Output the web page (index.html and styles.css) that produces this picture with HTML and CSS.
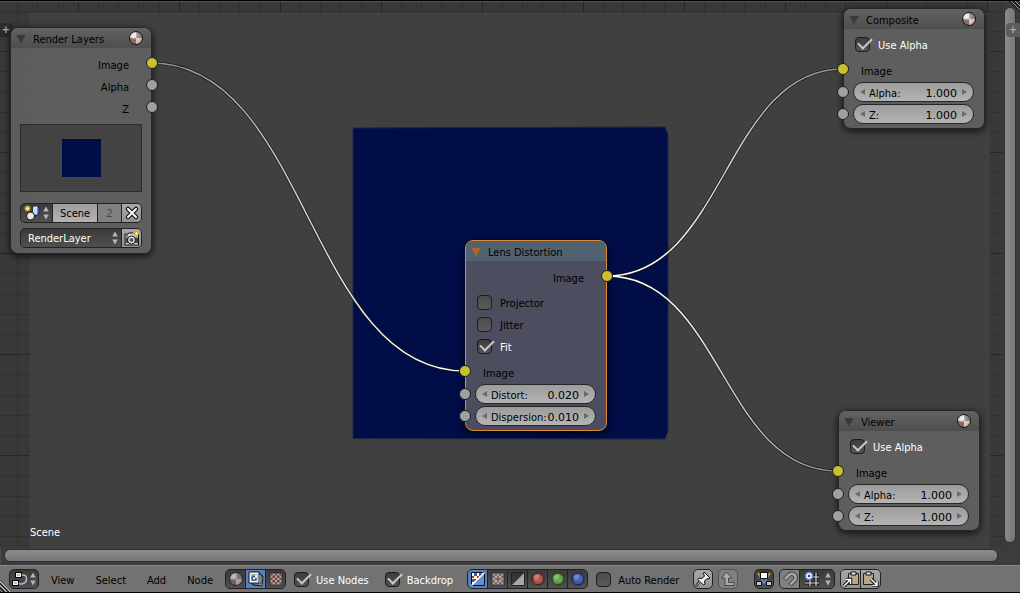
FILE: index.html
```html
<!DOCTYPE html>
<html lang="en">
<head>
<meta charset="UTF-8">
<meta name="viewport" content="width=device-width, initial-scale=1.0">
<title>Node Editor</title>
<link rel="stylesheet" href="styles.css">
</head>
<body>

<!-- shared icons -->
<svg class="defs" aria-hidden="true">
  <defs>
    <radialGradient id="shade" cx="0.35" cy="0.3" r="0.8">
      <stop offset="0" stop-color="#fff" stop-opacity="0.8"/>
      <stop offset="0.5" stop-color="#fff" stop-opacity="0"/>
      <stop offset="1" stop-color="#000" stop-opacity="0.4"/>
    </radialGradient>
    <radialGradient id="shade-soft" cx="0.35" cy="0.3" r="0.8">
      <stop offset="0" stop-color="#fff" stop-opacity="0.35"/>
      <stop offset="0.5" stop-color="#fff" stop-opacity="0"/>
      <stop offset="1" stop-color="#000" stop-opacity="0.4"/>
    </radialGradient>
  </defs>
  <symbol id="i-sphere" viewBox="0 0 16 16">
    <path d="M8 8V1.500A6.500 6.500 0 0 0 1.500 8z" fill="#d0d0d0"/>
    <path d="M8 8V1.500A6.500 6.500 0 0 1 14.500 8z" fill="#86807e"/>
    <path d="M8 8H1.500A6.500 6.500 0 0 0 8 14.500z" fill="#7e6660"/>
    <path d="M8 8v6.500A6.500 6.500 0 0 0 14.500 8z" fill="#ecc4b8"/>
    <circle cx="8" cy="8" r="6.500" fill="url(#shade)" stroke="#151515"/>
  </symbol>
  <symbol id="i-updown" viewBox="0 0 6 14">
    <path d="M3 0.500L5.800 5.500H0.200zM3 13.500L0.200 8.500H5.800z" fill="#b4b4b4"/>
  </symbol>
  <symbol id="i-checker" viewBox="0 0 16 16">
    <rect x="2" y="2" width="12" height="12" fill="#d8d0c8" stroke="#222"/>
    <path d="M2.500 2.500h2v2h-2zM7 2.500h2v2H7zM11.500 2.500h2v2h-2zM4.500 4.500H7V7H4.500zM9 4.500h2.500V7H9zM2.500 7h2v2h-2zM7 7h2v2H7zM11.500 7h2v2h-2zM4.500 9H7v2.500H4.500zM9 9h2.500v2.500H9zM2.500 11.500h2v2h-2zM7 11.500h2v2H7zM11.500 11.500h2v2h-2z" fill="#8c3e38"/>
  </symbol>
</svg>

<main class="editor">
  <section class="canvas">
    <div class="backdrop"></div>
    <svg class="wires" width="1003" height="548" viewBox="0 2 1003 548" aria-hidden="true">
      <defs>
        <linearGradient id="wireIn"><stop offset="0" stop-color="#888"/><stop offset="0.8" stop-color="#fff"/></linearGradient>
        <linearGradient id="wireOut"><stop offset="0.2" stop-color="#fff"/><stop offset="1" stop-color="#888"/></linearGradient>
      </defs>
      <path class="render" d="M353 128L665 127L668 135V431L665 439L353 438.500z"/>
      <path class="wire-edge" d="M151 63C308 63 308 371 465 371M607 276C725 276 725 69 843 69M607 276C722 276 722 471 838 471"/>
      <path class="wire" stroke="url(#wireIn)" d="M151 63C308 63 308 371 465 371"/>
      <path class="wire" stroke="url(#wireOut)" d="M607 276C725 276 725 69 843 69"/>
      <path class="wire" stroke="url(#wireOut)" d="M607 276C722 276 722 471 838 471"/>
    </svg>

    <button class="expand expand-left" aria-label="Show tools">+</button>

    <article class="node node-layers">
      <header class="node-head">
        <i class="fold"></i><h2>Render Layers</h2>
        <svg class="icon"><use href="#i-sphere"/></svg>
      </header>
      <div class="node-body">
        <div class="row out">Image<i class="socket color"></i></div>
        <div class="row out">Alpha<i class="socket"></i></div>
        <div class="row out">Z<i class="socket"></i></div>
        <div class="preview"><div class="preview-img"></div></div>
        <div class="group scene-row">
          <button class="dark browse" aria-label="Browse scene">
            <svg class="icon" viewBox="0 0 16 16">
              <path d="M9 2l4-1 2 1v7l-3 2-3-2z" fill="#5c8ed8" stroke="#16264a"/>
              <path d="M9 2l4-1v8l-4 1z" fill="#c4dcfa"/>
              <circle cx="6.500" cy="11" r="4" fill="#e8e8e8" stroke="#111"/>
              <circle cx="3.500" cy="3.500" r="3" fill="#b89a30"/><circle cx="3.500" cy="3.500" r="1.500" fill="#fff8a8"/>
            </svg>
            <svg class="updown"><use href="#i-updown"/></svg>
          </button>
          <input class="name" type="text" value="Scene" aria-label="Scene name">
          <button class="users">2</button>
          <button class="light" aria-label="Unlink scene">
            <svg class="icon" viewBox="0 0 16 16">
              <path d="M4 4l8 8M12 4l-8 8" stroke="#111" stroke-width="4.500" stroke-linecap="round"/>
              <path d="M4 4l8 8M12 4l-8 8" stroke="#f4f4f4" stroke-width="2.200" stroke-linecap="round"/>
            </svg>
          </button>
        </div>
        <div class="group layer-row">
          <div class="pick">
            <select aria-label="Render layer"><option>RenderLayer</option></select>
            <svg class="updown"><use href="#i-updown"/></svg>
          </div>
          <button class="light" aria-label="Render">
            <svg class="icon" viewBox="0 0 16 16">
              <path d="M1 4h3l1-1h4l1 1h4.500v11H1z" fill="#d8d8d8" stroke="#111"/>
              <path d="M1.500 7.500H14V13H1.500z" fill="#444"/>
              <circle cx="7.500" cy="10" r="4" fill="#e4e4e4" stroke="#111"/>
              <circle cx="7.500" cy="10" r="2" fill="#456"/>
              <path d="M2 5.700h2" stroke="#d22" stroke-width="1.500"/>
              <path d="M12.500 0l1 2.500 2.500 1-2.500 1-1 2.500-1-2.500-2.500-1 2.500-1z" fill="#fff2a0" stroke="#c89020" stroke-width="0.800"/>
            </svg>
          </button>
        </div>
      </div>
    </article>

    <article class="node node-lens selected">
      <header class="node-head">
        <i class="fold"></i><h2>Lens Distortion</h2>
      </header>
      <div class="node-body">
        <div class="row out">Image<i class="socket color"></i></div>
        <div class="checks">
          <label class="row check"><input type="checkbox">Projector</label>
          <label class="row check"><input type="checkbox">Jitter</label>
          <label class="row check"><input type="checkbox" checked>Fit</label>
        </div>
        <div class="row">Image<i class="socket color"></i></div>
        <div class="row num-row"><i class="socket"></i>
          <div class="num"><button class="dec" aria-label="Decrease"></button><label for="distort">Distort:</label><input id="distort" type="text" value="0.020"><button class="inc" aria-label="Increase"></button></div>
        </div>
        <div class="row num-row"><i class="socket"></i>
          <div class="num"><button class="dec" aria-label="Decrease"></button><label for="dispersion">Dispersion:</label><input id="dispersion" type="text" value="0.010"><button class="inc" aria-label="Increase"></button></div>
        </div>
      </div>
    </article>

    <article class="node node-composite">
      <header class="node-head">
        <i class="fold"></i><h2>Composite</h2>
        <svg class="icon"><use href="#i-sphere"/></svg>
      </header>
      <div class="node-body">
        <div class="checks first">
          <label class="row check"><input type="checkbox" checked>Use Alpha</label>
        </div>
        <div class="row">Image<i class="socket color"></i></div>
        <div class="row num-row"><i class="socket"></i>
          <div class="num"><button class="dec" aria-label="Decrease"></button><label for="c-alpha">Alpha:</label><input id="c-alpha" type="text" value="1.000"><button class="inc" aria-label="Increase"></button></div>
        </div>
        <div class="row num-row"><i class="socket"></i>
          <div class="num"><button class="dec" aria-label="Decrease"></button><label for="c-z">Z:</label><input id="c-z" type="text" value="1.000"><button class="inc" aria-label="Increase"></button></div>
        </div>
      </div>
    </article>

    <article class="node node-viewer">
      <header class="node-head">
        <i class="fold"></i><h2>Viewer</h2>
        <svg class="icon"><use href="#i-sphere"/></svg>
      </header>
      <div class="node-body">
        <div class="checks first">
          <label class="row check"><input type="checkbox" checked>Use Alpha</label>
        </div>
        <div class="row">Image<i class="socket color"></i></div>
        <div class="row num-row"><i class="socket"></i>
          <div class="num"><button class="dec" aria-label="Decrease"></button><label for="v-alpha">Alpha:</label><input id="v-alpha" type="text" value="1.000"><button class="inc" aria-label="Increase"></button></div>
        </div>
        <div class="row num-row"><i class="socket"></i>
          <div class="num"><button class="dec" aria-label="Decrease"></button><label for="v-z">Z:</label><input id="v-z" type="text" value="1.000"><button class="inc" aria-label="Increase"></button></div>
        </div>
      </div>
    </article>

    <p class="scene-label">Scene</p>
  </section>

  <div class="gutter-v"><div class="bar-v"></div></div>
  <div class="gutter-h"><div class="bar-h"></div></div>
  <button class="expand expand-right" aria-label="Show properties">+</button>
  <i class="grip grip-top"></i>
</main>

<footer class="toolbar">
  <i class="grip grip-bottom"></i>
  <button class="tool dark editor-type" aria-label="Editor type">
    <svg class="icon" viewBox="0 0 16 16">
      <path d="M8 4h3q3.500 0 3.500 4t-5 5H8" fill="none" stroke="#a8bce8" stroke-width="1.500"/>
      <rect x="3.500" y="1.500" width="6" height="5" fill="#f0f0f0" stroke="#000"/>
      <rect x="0.500" y="9.500" width="6" height="5" fill="#f0f0f0" stroke="#000"/>
      <path d="M5 4h3M2 12h3" stroke="#888"/>
      <circle cx="10.500" cy="4" r="1" fill="#e89010"/><circle cx="7.500" cy="12.500" r="1" fill="#e89010"/>
    </svg>
    <svg class="updown"><use href="#i-updown"/></svg>
  </button>
  <nav class="menus">
    <a href="#view">View</a>
    <a href="#select">Select</a>
    <a href="#add">Add</a>
    <a href="#node">Node</a>
  </nav>

  <div class="group tree-type">
    <button class="dark" aria-label="Shader nodes"><svg class="icon dim"><use href="#i-sphere"/></svg></button>
    <button class="dark on" aria-label="Compositing nodes">
      <svg class="icon" viewBox="0 0 16 16">
        <path d="M6 4l9 1-1 10-9-1z" fill="#e8e8e8" stroke="#111"/>
        <path d="M4 3h9v10H4z" fill="#eee" stroke="#111"/>
        <path d="M1 1h10v11H1z" fill="#fff" stroke="#111"/>
        <path d="M3 3h6.500v7H3z" fill="#6b9ce0"/>
        <circle cx="6" cy="7.500" r="1.800" fill="#fff" stroke="#123"/><path d="M7 3.500h2V7H7z" fill="#dce9fb"/>
        <circle cx="3.500" cy="3.500" r="1.200" fill="#f0c840"/>
      </svg>
    </button>
    <button class="dark" aria-label="Texture nodes"><svg class="icon dim"><use href="#i-checker"/></svg></button>
  </div>

  <label class="check use-nodes"><input type="checkbox" checked>Use Nodes</label>
  <label class="check use-backdrop"><input type="checkbox" checked>Backdrop</label>

  <div class="group channels">
    <button class="dark on" aria-label="Color and alpha">
      <svg class="icon" viewBox="0 0 16 16">
        <path d="M1.500 1.500h13v13h-13z" fill="#5f92d4" stroke="#111"/>
        <path d="M2 2h12L2 14z" fill="#fff"/>
        <path d="M2 5h2v2H2zM7 5h2v2H7zM4 8h2v2H4z" fill="#c03020"/>
        <path d="M4 2h3v3H4zM9 2h3v3H9zM2 8h2v3H2z" fill="#3860b0"/>
        <path d="M14.500 1.500l-13 13" stroke="#fff" stroke-width="1.500"/>
      </svg>
    </button>
    <button class="dark" aria-label="Color">
      <svg class="icon dim" viewBox="0 0 16 16">
        <rect x="2" y="2" width="12" height="12" fill="#e0dcd4" stroke="#222"/>
        <path d="M4.500 2.500H7v2H4.500zM11.500 4.500h2V7h-2zM7 7h2v2H7zM2.500 9h2v2.500h-2zM9 11.500h2.500v2H9z" fill="#b04838"/>
        <path d="M9 2.500h2.500v2H9zM2.500 4.500h2V7h-2zM11.500 9h2v2.500h-2zM4.500 11.500H7v2H4.500z" fill="#4a6aa8"/>
        <path d="M7 4.500h2V7H7zM4.500 7H7v2H4.500zM9 7h2.500v2H9zM7 9h2v2.500H7z" fill="#908a70"/>
      </svg>
    </button>
    <button class="dark" aria-label="Alpha">
      <svg class="icon dim" viewBox="0 0 16 16">
        <path d="M1.500 1.500h13v13h-13z" fill="#a8a8a8" stroke="#151515"/>
        <path d="M14 2v12H2z" fill="#d0d0d0"/>
        <path d="M2 2h12L2 14z" fill="#333"/>
      </svg>
    </button>
    <button class="dark" aria-label="Red"><svg class="icon" viewBox="0 0 16 16"><circle cx="8" cy="8" r="6" fill="#983c34"/><path d="M8 3l4 3-1 5H5L4 6z" fill="#b45248"/><circle cx="8" cy="8" r="6" fill="url(#shade-soft)" stroke="#401814"/></svg></button>
    <button class="dark" aria-label="Green"><svg class="icon" viewBox="0 0 16 16"><circle cx="8" cy="8" r="6" fill="#4c8c34"/><path d="M8 3l4 3-1 5H5L4 6z" fill="#62a448"/><circle cx="8" cy="8" r="6" fill="url(#shade-soft)" stroke="#1c3a12"/></svg></button>
    <button class="dark" aria-label="Blue"><svg class="icon" viewBox="0 0 16 16"><circle cx="8" cy="8" r="6" fill="#3048a0"/><path d="M8 3l4 3-1 5H5L4 6z" fill="#445cb8"/><circle cx="8" cy="8" r="6" fill="url(#shade-soft)" stroke="#101c48"/></svg></button>
  </div>

  <label class="check auto-render"><input type="checkbox">Auto Render</label>

  <button class="tool light" aria-label="Pin">
    <svg class="icon" viewBox="0 0 16 16">
      <path d="M1 15l5-6" stroke="#111" stroke-width="2.500"/>
      <path d="M9 1l6 6-2 1-1-0.500-2.500 2.500 0.500 3-1.500 1L3 8.500 4 7l3 0.500L9.500 5 8.500 3z" fill="#eee" stroke="#111"/>
      <path d="M1.500 14.500l4-4.500" stroke="#eee"/>
    </svg>
  </button>
  <button class="tool light faded up" aria-label="Go to parent">
    <svg class="icon" viewBox="0 0 16 16">
      <path d="M6.500 1L12 7H8.500v4.500H14v3H5V7H1.500z" fill="#c8c8c8" stroke="#222"/>
    </svg>
  </button>
  <button class="tool dark auto-offset" aria-label="Auto offset">
    <svg class="icon" viewBox="0 0 16 16">
      <path d="M3 4l5 8 5-8" fill="none" stroke="#5a98e0" stroke-width="1.500"/>
      <rect x="4.500" y="1.500" width="7" height="6" fill="#fff" stroke="#111"/>
      <path d="M0.500 10.500h5v4h-5zM10.500 10.500h5v4h-5z" fill="#c8c8c8" stroke="#111"/>
      <circle cx="2.500" cy="3" r="1.200" fill="#e89020"/><circle cx="13.500" cy="3" r="1.200" fill="#e89020"/>
    </svg>
  </button>
  <div class="group snap">
    <button class="light faded" aria-label="Snap">
      <svg class="icon" viewBox="0 0 16 16">
        <path d="M2.500 8.500l4.500-4.500q3-2.500 5.500 0t0 5.500L8 14" fill="none" stroke="#222" stroke-width="4.500"/>
        <path d="M3 8l4-4q3-2.500 5.500 0t0 5.500L8.500 13.500" fill="none" stroke="#c0c0c0" stroke-width="2.500"/>
      </svg>
    </button>
    <button class="dark snap-type" aria-label="Snap element">
      <svg class="icon" viewBox="0 0 16 16">
        <path d="M6 2v14M12 1v15M1 6h15M1 12h15" stroke="#111" stroke-width="3"/>
        <path d="M6 2v13.500M12 1.500v14M1 6h14.500M1 12h14.500" stroke="#ddd" stroke-width="1.200"/>
        <circle cx="5" cy="5" r="3.500" fill="#fff" stroke="#5a8cd8" stroke-width="1.500"/>
        <circle cx="5" cy="5" r="1.300" fill="#246"/>
      </svg>
      <svg class="updown"><use href="#i-updown"/></svg>
    </button>
  </div>
  <div class="group clipboard">
    <button class="light" aria-label="Copy nodes">
      <svg class="icon" viewBox="0 0 16 16">
        <path d="M5.500 2.500h10v11h-10z" fill="#b8a888" stroke="#222"/>
        <path d="M8 1h5v3H8z" fill="#eee" stroke="#111"/>
        <path d="M1 15l6-6M3 8.500h4.500V13" fill="none" stroke="#111" stroke-width="3.500"/>
        <path d="M1 15l6-6M3 8.500h4.500V13" fill="none" stroke="#fff" stroke-width="1.500"/>
      </svg>
    </button>
    <button class="light" aria-label="Paste nodes">
      <svg class="icon" viewBox="0 0 16 16">
        <path d="M0.500 2.500h10v11h-10z" fill="#b8a888" stroke="#222"/>
        <path d="M3 1h5v3H3z" fill="#eee" stroke="#111"/>
        <path d="M8 8l6 6M9.500 14.500H14V10" fill="none" stroke="#111" stroke-width="3.500"/>
        <path d="M8 8l6 6M9.500 14.500H14V10" fill="none" stroke="#fff" stroke-width="1.500"/>
      </svg>
    </button>
  </div>
</footer>

</body>
</html>
```

FILE: styles.css
```css
* {
  box-sizing: border-box;
}

body {
  display: flex;
  flex-direction: column;
  height: 100vh;
  margin: 0;
  overflow: hidden;
  background: #3c3c3c;
  color: #000;
  font: 11px/14px "DejaVu Sans Condensed", "DejaVu Sans", sans-serif;
  border-top: 1px solid #000;
  border-bottom: 1px solid #000;
}

button,
input,
select {
  margin: 0;
  padding: 0;
  border: 0;
  color: inherit;
  font: inherit;
}

h2,
p {
  margin: 0;
  font-size: 11px;
  font-weight: normal;
}

.defs {
  position: absolute;
  width: 0;
  height: 0;
}

.icon {
  flex: none;
  width: 16px;
  height: 16px;
}

.icon.dim {
  opacity: 0.7;
}

.updown {
  flex: none;
  width: 6px;
  height: 14px;
}

/* editor area */
.editor {
  position: relative;
  flex: 1;
  display: grid;
  grid-template: 1fr 17px / 1fr 17px;
  min-height: 0;
  border-top: 1px solid #555;
  border-left: 1px solid #4c4c4c;
}

.canvas {
  position: relative;
  overflow: hidden;
  margin-left: -1px;
  background-color: #393939;
  background-image:
    linear-gradient(#303030 1px, transparent 1px, transparent 20px, #303030 20px, #303030 21px, transparent 21px, transparent 40px, #272727 40px, #272727 41px, transparent 41px, transparent 60px, #303030 60px, #303030 61px, transparent 61px, transparent 81px, #303030 81px, #303030 82px, transparent 82px),
    linear-gradient(90deg, #303030 1px, transparent 1px, transparent 20px, #303030 20px, #303030 21px, transparent 21px, transparent 41px, #303030 41px, #303030 42px, transparent 42px, transparent 61px, #272727 61px, #272727 62px, transparent 62px, transparent 81px, #303030 81px, #303030 82px, transparent 82px);
  background-size: 101px 101px;
  background-position: 17px 9px;
}

.backdrop {
  position: absolute;
  inset: 11px 13px 0 30px;
  background: #404040;
}

.wires {
  position: absolute;
  top: 0;
  left: 0;
}

.render {
  fill: #000d47;
  stroke: #1c2444;
}

.wire,
.wire-edge {
  fill: none;
  stroke-width: 1.5;
}

.wire-edge {
  stroke: #1c1c1c;
  stroke-width: 3;
}

.gutter-v {
  padding: 5px 4px 5px 1px;
}

.bar-v {
  height: 100%;
  border: 1px solid #303030;
  border-radius: 6px;
  background: linear-gradient(90deg, #8c8c8c, #767676);
}

.gutter-h {
  grid-column: 1 / 3;
  padding: 1px 22px 3px 3px;
}

.bar-h {
  height: 13px;
  border: 1px solid #303030;
  border-radius: 6px;
  background: linear-gradient(#8c8c8c, #767676);
}

.expand {
  position: absolute;
  width: 14px;
  height: 14px;
  background: #2c2c2c;
  color: #a8a8a8;
  font-weight: bold;
  line-height: 14px;
}

.expand-left {
  top: 21px;
  left: -1px;
  border-radius: 0 4px 4px 0;
}

.expand-right {
  top: 21px;
  right: 0;
  border-radius: 4px 0 0 4px;
  background: #5c5c5c;
}

.grip {
  position: absolute;
  width: 12px;
  height: 12px;
}

.grip-top {
  top: -1px;
  right: 0;
  clip-path: polygon(0 0, 100% 0, 100% 100%);
  background: repeating-linear-gradient(45deg, #1c1c1c 0 1px, #999 1px 2px, #333 2px 3px);
}

.grip-bottom {
  bottom: 0;
  left: 0;
  clip-path: polygon(0 0, 100% 100%, 0 100%);
  background: repeating-linear-gradient(45deg, #1c1c1c 0 1px, #aaa 1px 2px, #333 2px 3px);
}

.scene-label {
  position: absolute;
  bottom: 8px;
  left: 30px;
  color: #fff;
}

/* nodes */
.node {
  position: absolute;
  width: 142px;
  border: 1px solid #262626;
  border-radius: 8px;
  background: rgba(97, 97, 97, 0.92);
  box-shadow: 0 2px 6px 1px rgba(0, 0, 0, 0.6);
}

.node-layers {
  top: 25px;
  left: 10px;
}

.node-lens {
  top: 238px;
  left: 465px;
}

.node-composite {
  top: 6px;
  left: 843px;
}

.node-viewer {
  top: 408px;
  left: 838px;
}

.node-head {
  display: flex;
  align-items: center;
  height: 20px;
  padding: 2px 7px 0 5px;
  border-radius: 7px 7px 0 0;
  background: linear-gradient(#626262, #4e4e4e);
}

.node-head h2 {
  flex: 1;
  margin-left: 7px;
  padding-top: 2px;
}

.node-head .icon {
  margin-top: -2px;
}

.fold {
  width: 10px;
  height: 9px;
  clip-path: polygon(0 0, 100% 0, 50% 100%);
  background: #3a3a3a;
}

.selected {
  border-color: #e08a34;
  background: #4c4d5f;
}

.selected .node-head {
  background: #50626f;
}

.selected .fold {
  background: #b86428;
}

.node-body {
  padding: 4px 0 3px;
}

.row {
  position: relative;
  display: flex;
  align-items: center;
  height: 22px;
  padding: 3px 22px 0 17px;
}

.row.out {
  justify-content: flex-end;
  padding-top: 5px;
}

.socket {
  position: absolute;
  top: 5px;
  left: -7px;
  width: 12px;
  height: 12px;
  border: 1px solid #1c1c1c;
  border-radius: 50%;
  background: #a0a0a0;
}

.socket.color {
  top: 4px;
  background: #c8c030;
}

.out .socket,
.out .socket.color {
  top: 5px;
  right: -7px;
  left: auto;
}

.checks {
  margin: 4px 0;
}

.checks.first {
  margin-top: 0;
}

.check {
  display: flex;
  align-items: center;
  gap: 8px;
  padding-top: 3px;
}

.row.check {
  padding: 3px 11px 0;
}

.check input {
  position: relative;
  flex: none;
  width: 15px;
  height: 15px;
  margin-bottom: 3px;
  appearance: none;
  border: 1px solid #1c1c1c;
  border-radius: 4px;
  background: linear-gradient(#4c4c4c, #5a5a5a);
}

.check input:checked {
  background: linear-gradient(#3c3c3c, #545454);
}

.check input:checked::after {
  content: "";
  position: absolute;
  top: -3px;
  left: 5px;
  width: 6px;
  height: 12px;
  border: solid #c8c8c8;
  border-width: 0 2px 2px 0;
  transform: rotate(45deg);
}

.check:has(:checked) {
  color: #fff;
}

.num-row {
  padding: 0 10px 0 9px;
}

.num {
  flex: 1;
  display: flex;
  align-items: center;
  min-width: 0;
  height: 20px;
  padding: 0 6px;
  border: 1px solid #262626;
  border-radius: 10px;
  background: linear-gradient(#9c9c9c, #b4b4b4);
}

.num label {
  margin-left: 4px;
  padding-top: 3px;
}

.num input {
  flex: 1;
  min-width: 0;
  margin-right: 5px;
  padding-top: 3px;
  background: none;
  font-family: "DejaVu Sans", sans-serif;
  text-align: right;
}

.num button {
  flex: none;
  width: 5px;
  height: 6px;
  background: #6a6a6a;
}

.dec {
  clip-path: polygon(100% 0, 100% 100%, 0 50%);
}

.inc {
  clip-path: polygon(0 0, 100% 50%, 0 100%);
}

.preview {
  display: flex;
  align-items: center;
  justify-content: center;
  height: 68px;
  margin: 6px 9px 11px;
  border: 1px solid #2c2c2c;
  background: #434343;
}

.preview-img {
  width: 39px;
  height: 38px;
  background: #000d47;
}

/* buttons */
.group {
  display: flex;
  height: 20px;
  border: 1px solid #222;
  border-radius: 5px;
  background: #222;
  overflow: hidden;
}

.group > * + * {
  margin-left: 1px;
}

.group button,
.tool {
  display: flex;
  align-items: center;
  justify-content: center;
  flex: none;
  width: 19px;
}

.tool {
  width: 20px;
  height: 20px;
  border: 1px solid #222;
  border-radius: 5px;
}

.dark {
  background: linear-gradient(#3a3a3a, #505050);
}

.dark.on {
  background: #5680c2;
}

.light {
  background: linear-gradient(#a8a8a8, #929292);
}

.tool.faded {
  border-color: #555;
}

.faded {
  background: #808080;
}

.faded .icon {
  opacity: 0.6;
}

.scene-row {
  margin: 0 9px 5px;
}

.layer-row {
  margin: 0 9px 2px;
}

.group .browse {
  gap: 3px;
  width: 31px;
}

.name {
  flex: 1;
  min-width: 0;
  padding-top: 2px;
  background: linear-gradient(#9c9c9c, #b4b4b4);
  text-align: center;
}

.group .users {
  width: 23px;
  padding-top: 2px;
  background: #808080;
  color: #444;
}

.pick {
  position: relative;
  flex: 1;
  display: flex;
}

.pick select {
  width: 100%;
  padding: 2px 0 0 7px;
  appearance: none;
  background: linear-gradient(#3a3a3a, #505050);
  color: #fff;
}

.pick .updown {
  position: absolute;
  top: 2px;
  right: 3px;
}

/* bottom bar */
.toolbar {
  position: relative;
  flex: none;
  display: flex;
  align-items: center;
  height: 27px;
  padding-left: 9px;
  border-top: 1px solid #888;
  background: #727272;
  white-space: nowrap;
}

.toolbar .check {
  gap: 7px;
}

.editor-type {
  gap: 2px;
  width: 30px;
}

.menus {
  display: flex;
  gap: 21px;
  margin: 0 12px;
  padding-top: 3px;
}

.menus a {
  color: #000;
  text-decoration: none;
}

.use-nodes {
  margin-left: 8px;
}

.use-backdrop {
  margin: 0 14px 0 16px;
}

.auto-render {
  margin: 0 14px 0 8px;
}

.up {
  margin: 0 16px 0 5px;
}

.snap {
  margin: 0 5px;
}

.group .snap-type {
  gap: 5px;
  width: 34px;
}
```
